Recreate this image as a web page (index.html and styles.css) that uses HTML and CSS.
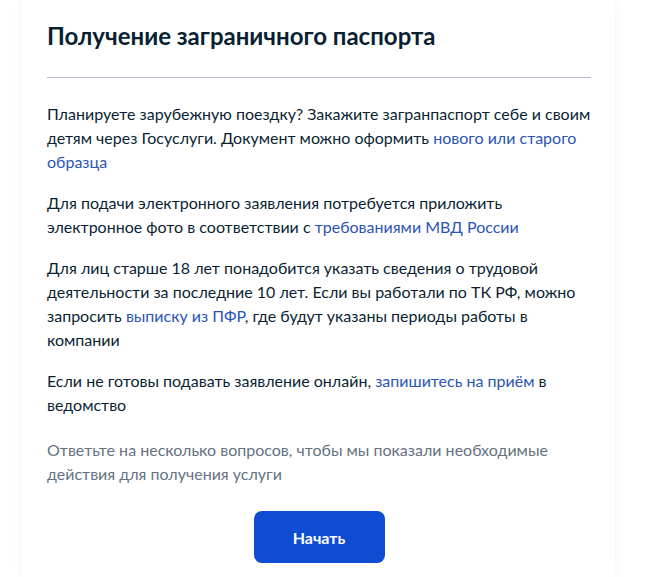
FILE: index.html
```html
<!DOCTYPE html>
<html>
	<head>
		<meta charset="UTF-8">
		<title>Получение заграничного паспорта</title>
		<link rel="stylesheet" href="styles.css">
	</head>
	<body>
		<div class="page">
			<div class="card">
				<h1 class="card_title">Получение заграничного паспорта</h1>
				<div class="card_text">
					<p>Планируете зарубежную поездку? Закажите загранпаспорт себе и своим детям через Госуслуги. Документ можно оформить <a href="#">нового или старого образца</a></p>
					<p>Для подачи электронного заявления потребуется приложить электронное фото в соответствии с <a href="#">требованиями МВД России</a></p>
					<p>Для лиц старше 18 лет понадобится указать сведения о трудовой деятельности за последние 10 лет. Если вы работали по ТК РФ, можно запросить <a href="#">выписку из ПФР</a>, где будут указаны периоды работы в компании</p>
					<p>Если не готовы подавать заявление онлайн, <a href="#">запишитесь на приём</a> в ведомство</p>
				</div>
				<p class="card_hint">Ответьте на несколько вопросов, чтобы мы показали необходимые действия для получения услуги</p>
				<div class="card_actions">
					<a class="btn" href="#">Начать</a>
				</div>
			</div>
		</div>
	</body>
</html>
```

FILE: styles.css
```css
* { margin: 0; padding: 0; box-sizing: border-box; }
body { background: #fff; font-family: Lato, "Noto Sans", sans-serif; color: #0b1f33; }
a { color: #2b55b5; text-decoration: none; }

.page { padding: 0 0 0 23px; }
.card { width: 592px; padding: 20px 24px 14px; background: #fff; box-shadow: 0 0 14px rgba(0, 20, 40, 0.05); }
.card_title { font-size: 24px; line-height: 32px; font-weight: 700; padding-bottom: 25px; border-bottom: 1px solid #b3b9cc; }

.card_text { padding-top: 24px; }
.card_text p, .card_hint { font-size: 16px; line-height: 24px; }
.card_text p { margin-bottom: 17px; }
.card_hint { margin-top: 21px; color: #66727f; }

.card_actions { display: flex; justify-content: center; padding-top: 25px; }
.btn { display: flex; align-items: center; justify-content: center; width: 131px; height: 52px; border-radius: 8px; background: #0d4cd3; color: #fff; font-size: 16px; font-weight: 700; }
```
